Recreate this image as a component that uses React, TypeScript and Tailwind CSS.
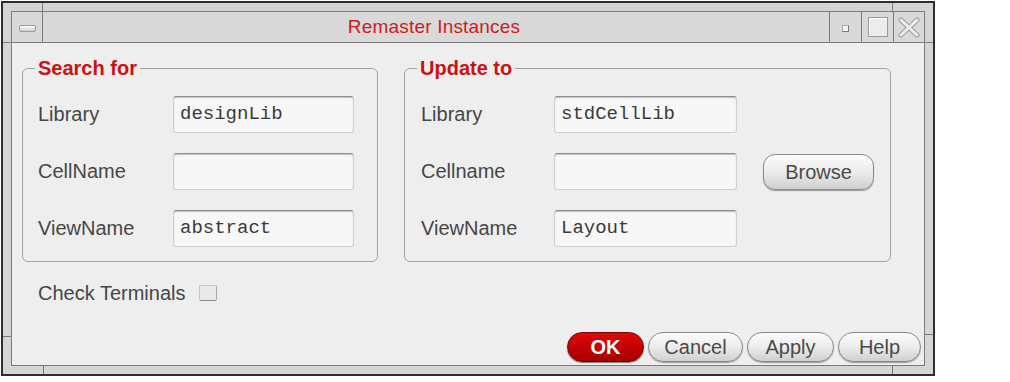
import React from "react";

const sans = "font-['Liberation_Sans',Arial,sans-serif]";
const mono = "font-['Liberation_Mono','Courier_New',monospace]";

function Field({ label, value, labelW, inputW }: { label: string; value?: string; labelW: string; inputW: string }) {
  return (
    <div className="flex items-center">
      <span className={`${labelW} text-[20px] leading-[24px] text-[#464646] -mt-[2px]`}>{label}</span>
      <div
        className={`${inputW} h-[37px] flex items-center pl-[6px] rounded-[3px] bg-[#f7f7f7] border border-[#cfcfcf] border-t-[#8e8e8e] shadow-[inset_0_1px_1px_#bdbdbd] ${mono} text-[19px] text-[#3a3a3a]`}
      >
        {value}
      </div>
    </div>
  );
}

function PillButton({ children, w }: { children: React.ReactNode; w: string }) {
  return (
    <button
      className={`${w} h-[30px] rounded-full border border-[#8a8a8a] bg-gradient-to-b from-[#fbfbfb] via-[#ececec] to-[#cfcfcf] shadow-[0_1px_1px_#9a9a9a] text-[20px] leading-none text-[#4a4a4a]`}
    >
      {children}
    </button>
  );
}

export default function App() {
  return (
    <div className={`w-[1010px] h-[382px] bg-white pt-px pl-px ${sans}`}>
      {/* Window */}
      <div className="relative w-[934px] h-[375px] border-2 border-[#2e2e2e] bg-[#d5d5d5] p-[8px]">
        {/* frame resize marks */}
        <div className="absolute left-[39px] top-0 w-px h-[8px] bg-[#7a7a7a]" />
        <div className="absolute left-0 top-[39px] w-[8px] h-px bg-[#7a7a7a]" />
        <div className="absolute left-[889px] top-0 w-px h-[8px] bg-[#7a7a7a]" />
        <div className="absolute left-[921px] top-[39px] w-[9px] h-px bg-[#7a7a7a]" />
        <div className="absolute left-[40px] bottom-0 w-px h-[8px] bg-[#7a7a7a]" />
        <div className="absolute left-0 top-[333px] w-[8px] h-px bg-[#7a7a7a]" />
        <div className="absolute left-[889px] bottom-0 w-px h-[8px] bg-[#7a7a7a]" />
        <div className="absolute left-[921px] top-[331px] w-[9px] h-px bg-[#7a7a7a]" />

        <div className="flex flex-col h-full border border-[#7c7c7c]">
          {/* Title bar */}
          <div className="flex h-[31px] border-b border-[#7c7c7c] bg-[#d9d9d9]">
            <div className="w-[31px] border-r border-[#7c7c7c] flex items-center justify-center">
              <div className="w-[17px] h-[7px] mt-[2px] rounded-[2px] border border-[#9a9a9a] bg-gradient-to-b from-white to-[#cfcfcf]" />
            </div>
            <div className="flex-1 flex items-center justify-center text-[19px] text-[#cc1c1c] pt-px pr-[4px] tracking-[0.2px]">
              Remaster Instances
            </div>
            <div className="w-[32px] border-l border-[#7c7c7c] flex items-center justify-center">
              <div className="w-[7px] h-[7px] mt-[2px] border border-[#b0b0b0] border-r-[#777] border-b-[#777] bg-[#f2f2f2]" />
            </div>
            <div className="w-[32px] border-l border-[#7c7c7c] flex items-center justify-center">
              <div className="w-[20px] h-[20px] border border-[#9a9a9a] bg-[#ececec] shadow-[inset_1px_1px_0_#fff]" />
            </div>
            <div className="w-[31px] border-l border-[#7c7c7c] flex items-center justify-center">
              <svg width="22" height="21" viewBox="0 0 22 21">
                <path d="M3 3 L19 18 M19 3 L3 18" stroke="#9a9a9a" strokeWidth="5" strokeLinecap="round" />
                <path d="M3 3 L19 18 M19 3 L3 18" stroke="#f0f0f0" strokeWidth="3" strokeLinecap="round" />
              </svg>
            </div>
          </div>

          {/* Content */}
          <div className="flex-1 flex flex-col bg-[#eeeeee] pl-[10px] pr-[3px] pt-[13px]">
            <div className="flex gap-[26px]">
              <fieldset className="w-[356px] border border-[#a2a2a2] rounded-[6px] pl-[15px] pt-[16px] pb-[14px] m-0">
                <legend className="-ml-[3px] px-[3px] text-[20px] leading-[24px] font-bold text-[#cc1111]">Search for</legend>
                <div className="flex flex-col gap-[20px]">
                  <Field label="Library" value="designLib" labelW="w-[135px]" inputW="w-[181px]" />
                  <Field label="CellName" labelW="w-[135px]" inputW="w-[181px]" />
                  <Field label="ViewName" value="abstract" labelW="w-[135px]" inputW="w-[181px]" />
                </div>
              </fieldset>

              <fieldset className="w-[487px] border border-[#a2a2a2] rounded-[6px] pl-[16px] pt-[16px] pb-[14px] m-0">
                <legend className="-ml-[4px] px-[3px] text-[20px] leading-[24px] font-bold text-[#cc1111]">Update to</legend>
                <div className="flex flex-col gap-[20px]">
                  <Field label="Library" value="stdCellLib" labelW="w-[133px]" inputW="w-[183px]" />
                  <div className="flex items-center">
                    <Field label="Cellname" labelW="w-[133px]" inputW="w-[183px]" />
                    <button className="ml-[26px] w-[111px] h-[36px] rounded-[12px] border border-[#8a8a8a] bg-gradient-to-b from-[#fbfbfb] via-[#ececec] to-[#cfcfcf] shadow-[0_1px_1px_#9a9a9a] text-[20px] leading-none text-[#4a4a4a]">
                      Browse
                    </button>
                  </div>
                  <Field label="ViewName" value="Layout" labelW="w-[133px]" inputW="w-[183px]" />
                </div>
              </fieldset>
            </div>

            <div className="flex items-center mt-[19px] pl-[16px]">
              <span className="text-[20px] leading-[24px] text-[#464646]">Check Terminals</span>
              <div className="ml-[14px] w-[18px] h-[16px] rounded-[2px] border border-[#c4c4c4] border-b-[#8a8a8a] border-r-[#a8a8a8] bg-[#e9e9e9]" />
            </div>

            <div className="flex justify-end gap-[4px] mt-[27px]">
              <button className="w-[77px] h-[30px] rounded-full border border-[#7a0000] bg-gradient-to-b from-[#e00808] to-[#a40000] shadow-[0_1px_1px_#777] text-[20px] leading-none font-bold text-white">
                OK
              </button>
              <PillButton w="w-[95px]">Cancel</PillButton>
              <PillButton w="w-[87px]">Apply</PillButton>
              <PillButton w="w-[83px]">Help</PillButton>
            </div>
          </div>
        </div>
      </div>
    </div>
  );
}
